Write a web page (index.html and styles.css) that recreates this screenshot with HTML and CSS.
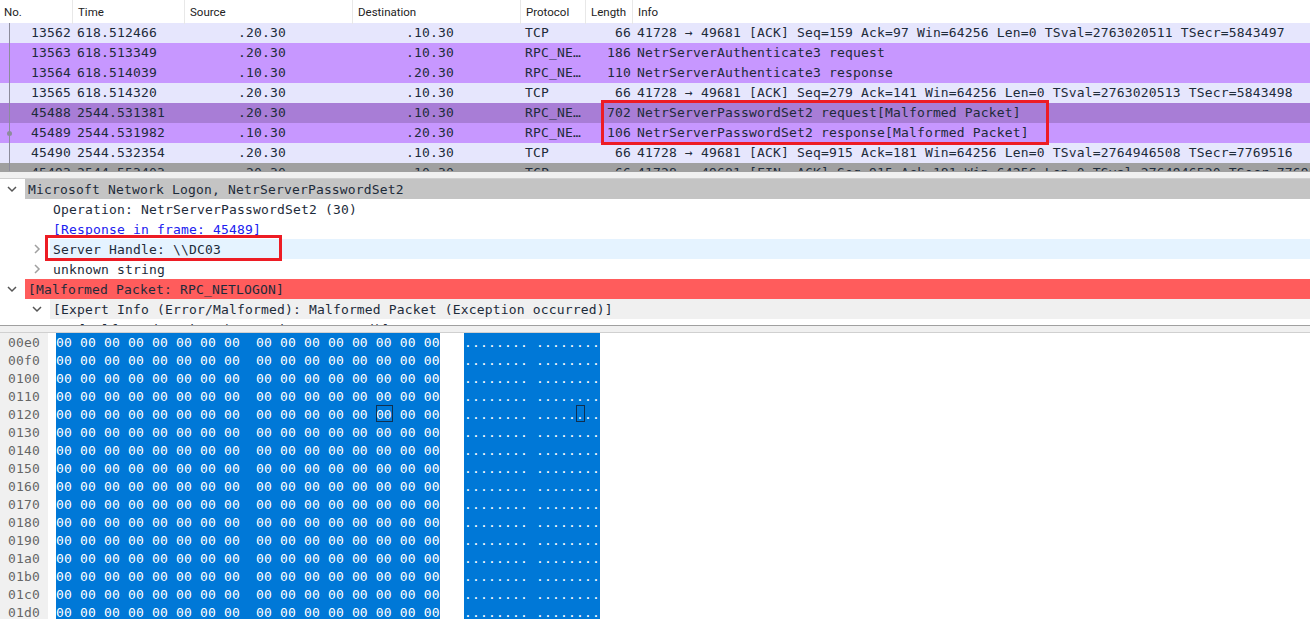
FILE: index.html
```html
<!DOCTYPE html>
<html>
<head>
<meta charset="utf-8">
<title>Wireshark capture</title>
<link rel="stylesheet" href="styles.css">
</head>
<body>
<section class="packets">
  <div class="head"><span>No.</span><span>Time</span><span>Source</span><span>Destination</span><span>Protocol</span><span>Length</span><span>Info</span></div>
  <div class="row tcp"><span class="num">13562</span><span>618.512466</span><span class="ip">.20.30</span><span class="ip">.10.30</span><span>TCP</span><span class="num">66</span><span>41728 → 49681 [ACK] Seq=159 Ack=97 Win=64256 Len=0 TSval=2763020511 TSecr=5843497</span></div>
  <div class="row rpc"><span class="num">13563</span><span>618.513349</span><span class="ip">.20.30</span><span class="ip">.10.30</span><span>RPC_NE…</span><span class="num">186</span><span>NetrServerAuthenticate3 request</span></div>
  <div class="row rpc"><span class="num">13564</span><span>618.514039</span><span class="ip">.10.30</span><span class="ip">.20.30</span><span>RPC_NE…</span><span class="num">110</span><span>NetrServerAuthenticate3 response</span></div>
  <div class="row tcp"><span class="num">13565</span><span>618.514320</span><span class="ip">.20.30</span><span class="ip">.10.30</span><span>TCP</span><span class="num">66</span><span>41728 → 49681 [ACK] Seq=279 Ack=141 Win=64256 Len=0 TSval=2763020513 TSecr=5843498</span></div>
  <div class="row sel"><span class="num">45488</span><span>2544.531381</span><span class="ip">.20.30</span><span class="ip">.10.30</span><span>RPC_NE…</span><span class="num">702</span><span>NetrServerPasswordSet2 request[Malformed Packet]</span></div>
  <div class="row rpc"><span class="num">45489</span><span>2544.531982</span><span class="ip">.10.30</span><span class="ip">.20.30</span><span>RPC_NE…</span><span class="num">106</span><span>NetrServerPasswordSet2 response[Malformed Packet]</span></div>
  <div class="row tcp"><span class="num">45490</span><span>2544.532354</span><span class="ip">.20.30</span><span class="ip">.10.30</span><span>TCP</span><span class="num">66</span><span>41728 → 49681 [ACK] Seq=915 Ack=181 Win=64256 Len=0 TSval=2764946508 TSecr=7769516</span></div>
  <div class="row fin"><span class="num">45493</span><span>2544.553403</span><span class="ip">.20.30</span><span class="ip">.10.30</span><span>TCP</span><span class="num">66</span><span>41728 → 49681 [FIN, ACK] Seq=915 Ack=181 Win=64256 Len=0 TSval=2764946520 TSecr=7769516</span></div>
  <i class="rail"></i><i class="rail-dot"></i>
  <i class="callout callout-a"></i>
</section>
<div class="split"></div>
<section class="tree">
  <div class="node d0 picked"><svg class="chev" viewBox="0 0 10 10"><path d="M1 3l4 4 4-4"/></svg><span>Microsoft Network Logon, NetrServerPasswordSet2</span></div>
  <div class="node d1"><span>Operation: NetrServerPasswordSet2 (30)</span></div>
  <div class="node d1 link"><span>[Response in frame: 45489]</span></div>
  <div class="node d1 hover"><svg class="chev light" viewBox="0 0 10 10"><path d="M3 1l4 4-4 4"/></svg><span>Server Handle: \\DC03</span></div>
  <div class="node d1"><svg class="chev light" viewBox="0 0 10 10"><path d="M3 1l4 4-4 4"/></svg><span>unknown string</span></div>
  <div class="node d0 bad"><svg class="chev" viewBox="0 0 10 10"><path d="M1 3l4 4 4-4"/></svg><span>[Malformed Packet: RPC_NETLOGON]</span></div>
  <div class="node d1 grey"><svg class="chev" viewBox="0 0 10 10"><path d="M1 3l4 4 4-4"/></svg><span>[Expert Info (Error/Malformed): Malformed Packet (Exception occurred)]</span></div>
  <div class="node d2"><span>[Malformed Packet (Exception occurred)]</span></div>
  <i class="callout callout-b"></i>
</section>
<div class="split"></div>
<section class="hex">
  <div class="line"><span class="off">00e0</span><span class="bytes">00 00 00 00 00 00 00 00  00 00 00 00 00 00 00 00</span><span class="ascii">........ ........</span></div>
  <div class="line"><span class="off">00f0</span><span class="bytes">00 00 00 00 00 00 00 00  00 00 00 00 00 00 00 00</span><span class="ascii">........ ........</span></div>
  <div class="line"><span class="off">0100</span><span class="bytes">00 00 00 00 00 00 00 00  00 00 00 00 00 00 00 00</span><span class="ascii">........ ........</span></div>
  <div class="line"><span class="off">0110</span><span class="bytes">00 00 00 00 00 00 00 00  00 00 00 00 00 00 00 00</span><span class="ascii">........ ........</span></div>
  <div class="line"><span class="off">0120</span><span class="bytes">00 00 00 00 00 00 00 00  00 00 00 00 00 <b class="cursor">00</b> 00 00</span><span class="ascii">........ .....<b class="cursor">.</b>..</span></div>
  <div class="line"><span class="off">0130</span><span class="bytes">00 00 00 00 00 00 00 00  00 00 00 00 00 00 00 00</span><span class="ascii">........ ........</span></div>
  <div class="line"><span class="off">0140</span><span class="bytes">00 00 00 00 00 00 00 00  00 00 00 00 00 00 00 00</span><span class="ascii">........ ........</span></div>
  <div class="line"><span class="off">0150</span><span class="bytes">00 00 00 00 00 00 00 00  00 00 00 00 00 00 00 00</span><span class="ascii">........ ........</span></div>
  <div class="line"><span class="off">0160</span><span class="bytes">00 00 00 00 00 00 00 00  00 00 00 00 00 00 00 00</span><span class="ascii">........ ........</span></div>
  <div class="line"><span class="off">0170</span><span class="bytes">00 00 00 00 00 00 00 00  00 00 00 00 00 00 00 00</span><span class="ascii">........ ........</span></div>
  <div class="line"><span class="off">0180</span><span class="bytes">00 00 00 00 00 00 00 00  00 00 00 00 00 00 00 00</span><span class="ascii">........ ........</span></div>
  <div class="line"><span class="off">0190</span><span class="bytes">00 00 00 00 00 00 00 00  00 00 00 00 00 00 00 00</span><span class="ascii">........ ........</span></div>
  <div class="line"><span class="off">01a0</span><span class="bytes">00 00 00 00 00 00 00 00  00 00 00 00 00 00 00 00</span><span class="ascii">........ ........</span></div>
  <div class="line"><span class="off">01b0</span><span class="bytes">00 00 00 00 00 00 00 00  00 00 00 00 00 00 00 00</span><span class="ascii">........ ........</span></div>
  <div class="line"><span class="off">01c0</span><span class="bytes">00 00 00 00 00 00 00 00  00 00 00 00 00 00 00 00</span><span class="ascii">........ ........</span></div>
  <div class="line"><span class="off">01d0</span><span class="bytes">00 00 00 00 00 00 00 00  00 00 00 00 00 00 00 00</span><span class="ascii">........ ........</span></div>
</section>
</body>
</html>
```
FILE: styles.css
```css
html, body { margin: 0; height: 619px; overflow: hidden; background: #fff; }
body {
  font-family: "DejaVu Sans Mono", monospace;
  font-size: 13px;
  letter-spacing: 0.17px;
  color: #1d2b3a;
}
.row span, .node span, .off, .bytes, .ascii { white-space: pre; }

.packets { position: relative; height: 171px; overflow: hidden; }
.head, .row {
  display: grid;
  grid-template-columns: 73px 112px 168px 168px 65px 47px 1fr;
}
.head {
  height: 23px;
  font: 11.5px/24px Roboto, "Liberation Sans", sans-serif;
  letter-spacing: 0;
  color: #222;
}
.head span { padding-left: 5px; border-right: 1px solid #e8e8e8; }
.head span:first-child { padding-left: 4px; }
.head span:last-child { border-right: 0; }
.row { height: 20px; line-height: 19px; overflow: hidden; }
.row span { padding-left: 4px; overflow: hidden; }
.row .num { text-align: right; padding: 0 2px 0 0; }
.row .ip { padding-left: 53px; }
.tcp { background: #e6e6fd; }
.rpc { background: #c797ff; }
.sel { background: #a87dd6; }
.fin { background: #a0a0a0; }
.rail { position: absolute; left: 9px; top: 23px; width: 1px; height: 148px; background: #8c8c9c; }
.rail-dot { position: absolute; left: 7px; top: 131px; width: 5px; height: 5px; border-radius: 50%; background: #8c8c9c; }

.callout { position: absolute; border: 3px solid #ed1c24; box-sizing: border-box; pointer-events: none; }
.callout-a { left: 601px; top: 100px; width: 448px; height: 45px; }
.callout-b { left: 45px; top: 56px; width: 237px; height: 26px; }

.split { height: 6px; background: #f0f0f0; border-top: 1px solid #a0a0a0; border-bottom: 1px solid #d0d0d0; }

.tree { position: relative; height: 146px; overflow: hidden; }
.node { display: flex; align-items: center; height: 20px; position: relative; line-height: 21px; }
.node > span { padding-left: 3px; flex: 1; height: 20px; }
.d0 { padding-left: 25px; }
.d1 { padding-left: 50px; }
.d2 { padding-left: 75px; }
.chev {
  position: absolute; top: 5px; width: 10px; height: 10px;
  fill: none; stroke: #555; stroke-width: 1.5;
}
.d0 .chev { left: 7px; }
.d1 .chev { left: 32px; }
.chev.light { stroke: #a0a0a0; }
.picked > span { background: #c4c4c4; }
.hover > span { background: #e5f3ff; }
.bad > span { background: #ff5c5c; }
.grey > span { background: #f0f0f0; }
.link { color: #2020f0; }

.hex { height: 286px; overflow: hidden; }
.line { display: flex; height: 18px; line-height: 20px; }
.off { width: 40px; padding-left: 8px; background: #f0f0f0; color: #666; margin-right: 8px; }
.bytes, .ascii { background: #0078d7; color: #fff; }
.bytes { width: 384px; margin-right: 24px; }
.ascii { width: 136px; }
.cursor { display: inline-block; height: 17px; line-height: 20px; vertical-align: top; font-weight: normal; outline: 1px solid #10304f; outline-offset: -1px; padding: 0 1px 0 0; margin-right: -1px; }
```
